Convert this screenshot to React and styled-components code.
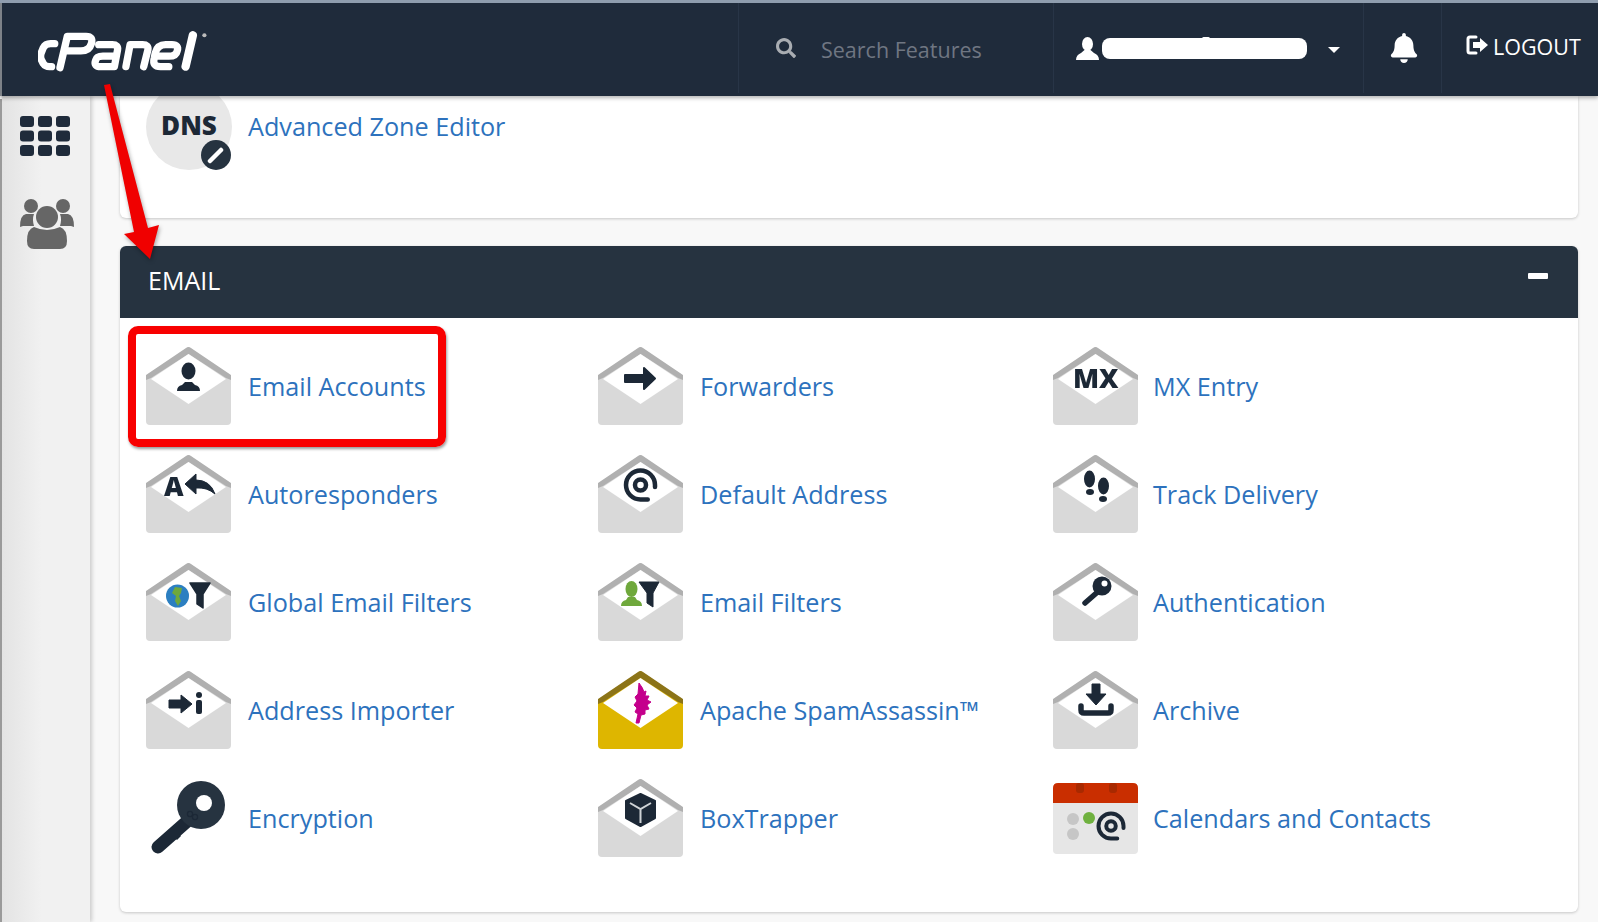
import React from 'react';
import styled, { createGlobalStyle } from 'styled-components';
import { FaSearch, FaBell } from 'react-icons/fa';

const GlobalStyle = createGlobalStyle`
  html, body {
    margin: 0;
    padding: 0;
    background: #f8f8f8;
    font-family: "Open Sans", "Liberation Sans", sans-serif;
  }
`;

const Page = styled.div`
  position: relative;
  width: 1598px;
  height: 922px;
  overflow: hidden;
  display: flex;
  flex-direction: column;
  background: #f8f8f8;
  border-top: 3px solid #8f9dae;
  box-sizing: border-box;
`;

const Header = styled.header`
  position: relative;
  z-index: 2;
  flex: none;
  height: 93px;
  display: flex;
  align-items: stretch;
  background: #1f2b3b;
  border-left: 2px solid #7d8288;
  box-shadow: 0 2px 4px rgba(0, 0, 0, 0.3);
`;

const LogoWrap = styled.div`
  flex: none;
  width: 736px;
  padding: 28px 0 0 36px;
  box-sizing: border-box;
`;

const HeaderCell = styled.div`
  flex: none;
  width: ${(p) => p.$w}px;
  box-sizing: border-box;
  display: flex;
  align-items: center;
  border-left: 1px solid #283547;
  margin-bottom: 3px;
  padding-left: ${(p) => p.$pad}px;
  color: #fff;
`;

const SearchText = styled.span`
  font-size: 21.5px;
  color: #6f7682;
  margin-left: 25px;
  margin-top: 2px;
`;

const Redacted = styled.span`
  position: relative;
  display: block;
  width: 205px;
  height: 21px;
  margin-left: 3px;
  background: #fff;
  border-radius: 8px;

  &::before {
    content: '';
    position: absolute;
    left: 100px;
    top: -1px;
    width: 8px;
    height: 3px;
    border-radius: 2px;
    background: #fff;
  }
`;

const Caret = styled.span`
  width: 0;
  height: 0;
  margin-left: 21px;
  margin-top: 3px;
  border-left: 6px solid transparent;
  border-right: 6px solid transparent;
  border-top: 6px solid #fff;
`;

const LogoutText = styled.span`
  font-size: 21.5px;
  margin-left: 4px;
  margin-top: -4px;
`;

const Body = styled.div`
  flex: 1;
  display: flex;
  min-height: 0;
`;

const Sidebar = styled.nav`
  flex: none;
  width: 88px;
  margin-left: 2px;
  padding: 20px 0 0 18px;
  box-sizing: border-box;
  display: flex;
  flex-direction: column;
  gap: 43px;
  background: linear-gradient(90deg, #e3e3e3 0, #f1f1f1 40px);
  box-shadow: 2px 0 4px rgba(0, 0, 0, 0.18);
`;

const LeftEdge = styled.div`
  position: absolute;
  left: 0;
  top: 96px;
  bottom: 0;
  width: 2px;
  background: #9a9a9a;
`;

const Content = styled.main`
  flex: 1;
  padding: 0 20px 0 30px;
  display: flex;
  flex-direction: column;
  gap: 28px;
`;

const TopPanel = styled.section`
  height: 122px;
  padding-left: 26px;
  background: #fff;
  border-radius: 0 0 6px 6px;
  box-shadow: 0 1px 3px rgba(0, 0, 0, 0.2);
  overflow: hidden;
`;

const TopRow = styled.div`
  display: flex;
  align-items: center;
  margin-top: -12px;
`;

const DnsIcon = styled.div`
  position: relative;
  flex: none;
  width: 86px;
  height: 86px;
  margin-right: 16px;
  border-radius: 50%;
  background: #e8e8e8;
  color: #1c2836;
  font-size: 26px;
  font-weight: 800;
  line-height: 82px;
  text-align: center;
`;

const DnsBadge = styled.span`
  position: absolute;
  right: 1px;
  bottom: 0;
  width: 30px;
  height: 30px;
  border-radius: 50%;
  background: #263340;
  display: flex;
  align-items: center;
  justify-content: center;
`;

const EmailPanel = styled.section`
  background: #fff;
  border-radius: 6px;
  box-shadow: 0 1px 3px rgba(0, 0, 0, 0.2);
`;

const PanelHead = styled.div`
  height: 72px;
  padding: 0 30px 4px 28px;
  box-sizing: border-box;
  display: flex;
  align-items: center;
  justify-content: space-between;
  background: #263340;
  border-radius: 6px 6px 0 0;
  color: #fff;
  font-size: 25px;
`;

const Minus = styled.span`
  display: block;
  width: 20px;
  height: 6px;
  margin-top: -8px;
  background: #fff;
  border-radius: 1px;
`;

const IconSlot = styled.span`
  flex: none;
  display: block;
  width: 85px;
  margin-right: 17px;
  line-height: 0;

  svg {
    display: block;
    filter: blur(0.35px);
  }
`;

const Feature = styled.a`
  position: relative;
  display: flex;
  align-items: center;
  font-size: 25.2px;
  color: #2d72bd;
  text-decoration: none;
`;

const Grid = styled.div`
  display: grid;
  grid-template-columns: 452px 455px 1fr;
  grid-auto-rows: 108px;
  padding: 14px 0 40px 26px;

  ${Feature}:nth-child(3n) ${IconSlot} {
    margin-right: 15px;
  }
`;

const ZoneLink = styled(Feature)`
  top: -1px;
`;

const Highlight = styled.span`
  position: absolute;
  left: -18px;
  top: -6px;
  width: 318px;
  height: 121px;
  box-sizing: border-box;
  border: 8px solid #f80000;
  border-radius: 10px;
  box-shadow: 1px 2px 3px rgba(0, 0, 0, 0.4);
`;

const Arrow = styled.svg`
  position: absolute;
  left: 0;
  top: -3px;
  z-index: 3;
  filter: drop-shadow(1px 2px 2px rgba(0, 0, 0, 0.35));
`;

const DARK = '#1c2836';

const Logo = () => (
  <svg width="180" height="42" viewBox="0 0 172 40" fill="none" stroke="#fff" strokeWidth="7" strokeLinecap="round" strokeLinejoin="round">
    <path d="M16 12 H12 Q7 12 5 16 L3 21 Q2 24 3 27 L5 31 Q7 34 11 34 H13" />
    <path d="M21 35 L28 5 H46 Q53 5 51 12 Q49 19 41 19 H27" />
    <path d="M58 13 H71 Q77 13 76 18 L73 34 H60 Q53 34 55 28 Q56 24 62 24 H74" />
    <path d="M84 34 L88 13 H100 Q106 13 105 18 L101 34" />
    <path d="M125 34 H117 Q109 34 111 26 L112 21 Q114 13 122 13 H128 Q135 13 133 19 Q132 24 125 24 H112" />
    <path d="M141 34 L148 4" strokeWidth="8" />
    <circle cx="159" cy="4" r="2" fill="#bbb" stroke="none" />
  </svg>
);

const UserGlyph = () => (
  <svg width="23" height="23" viewBox="0 0 23 23" fill="#fff">
    <ellipse cx="11.5" cy="7" rx="5.5" ry="7" />
    <path d="M0 23 Q0 18 5 16 L8.5 13 H14.5 L18 16 Q23 18 23 23 Z" />
  </svg>
);

const LogoutGlyph = () => (
  <svg width="23" height="20" viewBox="0 0 23 20" fill="none" style={{ marginTop: -6 }}>
    <path d="M10 2 H4 Q2 2 2 4 V16 Q2 18 4 18 H10" stroke="#fff" strokeWidth="3" strokeLinecap="round" />
    <path d="M7 7 H14 V3 L22 10 L14 17 V13 H7 Z" fill="#fff" />
  </svg>
);

const AppsIcon = () => (
  <svg width="50" height="40" viewBox="0 0 50 40" fill="#1f2b3b">
    {[0, 14.5, 29].map((y) =>
      [0, 18, 36].map((x) => <rect key={`${x}-${y}`} x={x} y={y} width="14" height="11" rx="3" />)
    )}
  </svg>
);

const UsersIcon = () => (
  <svg width="54" height="50" viewBox="0 0 54 50" fill="#666">
    <circle cx="11" cy="7" r="7" />
    <circle cx="43" cy="7" r="7" />
    <path d="M0 28 Q0 16 6 15 H14 Q12 20 14 27 H3 Q0 28 0 28 Z" />
    <path d="M54 28 Q54 16 48 15 H40 Q42 20 40 27 H51 Q54 28 54 28 Z" />
    <circle cx="27" cy="18" r="11" />
    <path d="M7 42 Q7 30 14 28 Q27 34 40 28 Q47 30 47 42 Q47 50 40 50 H14 Q7 50 7 42 Z" />
  </svg>
);

const Envelope = ({ yellow, children }) => (
  <svg width="85" height="78" viewBox="0 0 85 78">
    <path d="M0 29 L42.5 0 L85 29 V74 Q85 78 81 78 H4 Q0 78 0 74 Z" fill={yellow ? '#deb600' : '#d9d9d9'} />
    <path d="M0 28 L40 1 Q42.5 -1 45 1 L85 28 V33 L80 31 L42.5 7 L5 31 L0 33 Z" fill={yellow ? '#8c7418' : '#b0b0b0'} />
    <path d="M42.5 7 L80 32 L42.5 57 L5 32 Z" fill="#fff" />
    {children}
  </svg>
);

const Funnel = ({ x }) => (
  <path transform={`translate(${x} 0)`} d="M0 20 H20 L13 31 V45 L7 41 V31 Z" fill={DARK} stroke={DARK} strokeWidth="1.5" strokeLinejoin="round" />
);

const AtSign = ({ cx, cy, r, w }) => (
  <g fill="none" stroke={DARK} strokeWidth={w} strokeLinecap="round">
    <circle cx={cx} cy={cy} r={r * 0.38} />
    <path d={`M${cx + r * 0.5} ${cy + r} H${cx} A${r} ${r} 0 1 1 ${cx + r} ${cy} V${cy + 2}`} />
  </g>
);

const glyphs = {
  accounts: (
    <g fill={DARK}>
      <ellipse cx="42.5" cy="24" rx="7" ry="8.5" />
      <path d="M31 44 Q31 39 36 38 L39 35 H46 L49 38 Q54 39 54 44 Z" />
    </g>
  ),
  responders: (
    <g fill={DARK}>
      <text x="18" y="41" fontFamily="Open Sans" fontWeight="800" fontSize="27">A</text>
      <path d="M39 29 L50 19 V25 Q64 25 69 39 Q61 32 50 33 V39 Z" stroke={DARK} strokeLinejoin="round" />
    </g>
  ),
  global: (
    <g>
      <circle cx="31.5" cy="33" r="11.5" fill="#2c7fc1" />
      <path d="M29 24 L36 25 L35 30 L33 33 L35 38 L32 43 L29 38 L30 33 L26 30 Z" fill="#6fa83c" />
      <Funnel x={44} />
    </g>
  ),
  importer: (
    <g fill={DARK}>
      <path d="M23 29 H35 V24 L46 33 L35 42 V37 H23 Z" stroke={DARK} strokeLinejoin="round" />
      <circle cx="53" cy="24" r="3" />
      <rect x="50" y="29" width="6" height="14" rx="2" />
    </g>
  ),
  forwarders: (
    <path d="M27 28 H46 V21 L57 31.5 L46 42 V35 H27 Z" fill={DARK} stroke={DARK} strokeWidth="2" strokeLinejoin="round" />
  ),
  defaultAddress: <AtSign cx={42.5} cy={30} r={14.5} w={4.5} />,
  filters: (
    <g>
      <g fill="#6fa83c">
        <ellipse cx="33.5" cy="26" rx="6" ry="8" />
        <path d="M23 43 Q23 38 28 37 L30 34 H37 L39 37 Q44 38 44 43 Z" />
      </g>
      <path d="M41 19 H61 L55 30 V44 L49 40 V30 Z" fill={DARK} stroke={DARK} strokeLinejoin="round" />
    </g>
  ),
  spam: (
    <path d="M41 12 Q45 17 46 21 L48 20 L47 25 L51 25 L49 29 L53 31 L49 34 L51 38 L47 39 L47 43 L43 44 L41 52 L38 52 L40 43 L37 41 L39 37 L36 34 L39 30 L37 26 L40 23 Z" fill="#c4008c" stroke="#c4008c" strokeLinejoin="round" />
  ),
  box: (
    <g>
      <path d="M42.5 15 L57 22 V39 L42.5 47 L28 39 V22 Z" fill={DARK} stroke={DARK} strokeWidth="2" strokeLinejoin="round" />
      <path d="M32 24 L42.5 30 L53 24 M42.5 30 V44" fill="none" stroke="#cfd3d6" strokeWidth="2" />
    </g>
  ),
  mx: (
    <text x="20" y="41" fontFamily="Open Sans" fontWeight="800" fontSize="27" fill={DARK}>MX</text>
  ),
  track: (
    <g fill={DARK}>
      <ellipse cx="36.5" cy="24" rx="5.5" ry="8.5" />
      <ellipse cx="37" cy="37" rx="4" ry="3" />
      <ellipse cx="50.5" cy="31" rx="5.5" ry="8.5" />
      <ellipse cx="50" cy="44" rx="4" ry="3" />
    </g>
  ),
  auth: (
    <g>
      <path d="M48 26 L32 40" stroke={DARK} strokeWidth="5.5" strokeLinecap="round" />
      <circle cx="49" cy="23" r="9.5" fill={DARK} />
      <circle cx="51.5" cy="20.5" r="3" fill="#fff" />
    </g>
  ),
  archive: (
    <g>
      <path d="M39 13 H47 V23 H53 L43 34 L33 23 H39 Z" fill={DARK} stroke={DARK} strokeLinejoin="round" />
      <path d="M28 35 V39 Q28 42 31 42 H55 Q58 42 58 39 V35" fill="none" stroke={DARK} strokeWidth="5.5" strokeLinecap="round" />
    </g>
  ),
};

const EnvelopeIcon = ({ name, yellow }) => <Envelope yellow={yellow}>{glyphs[name]}</Envelope>;

const KeyIcon = () => (
  <svg width="85" height="74" viewBox="0 0 85 74">
    <path d="M46 36 L12 66" stroke="#1c2836" strokeWidth="13" strokeLinecap="round" />
    <path d="M24 52 L31 59 L35 55 L28 48 Z" fill="#1c2836" />
    <circle cx="55" cy="24" r="24" fill="#263340" />
    <circle cx="58" cy="22" r="8" fill="#fff" />
    <g fill="none" stroke="#1c2836" strokeWidth="1.2">
      <circle cx="44" cy="33" r="2.6" />
      <circle cx="49" cy="36" r="2.6" />
    </g>
  </svg>
);

const CalendarIcon = () => (
  <svg width="85" height="71" viewBox="0 0 85 71">
    <path d="M0 20 V5 Q0 0 5 0 H80 Q85 0 85 5 V20 Z" fill="#c92e00" />
    <rect x="23" y="0" width="8" height="10" rx="3" fill="#a82900" />
    <rect x="56" y="0" width="8" height="10" rx="3" fill="#a82900" />
    <path d="M0 20 H85 V67 Q85 71 81 71 H4 Q0 71 0 67 Z" fill="#e6e6e6" />
    <circle cx="20" cy="36" r="6" fill="#c6c6c6" />
    <circle cx="36" cy="35" r="6" fill="#6fb13f" />
    <circle cx="20" cy="51" r="6" fill="#c6c6c6" />
    <AtSign cx={58} cy={43} r={12.5} w={4} />
  </svg>
);

const features = [
  { label: 'Email Accounts', icon: <EnvelopeIcon name="accounts" />, marked: true },
  { label: 'Forwarders', icon: <EnvelopeIcon name="forwarders" /> },
  { label: 'MX Entry', icon: <EnvelopeIcon name="mx" /> },
  { label: 'Autoresponders', icon: <EnvelopeIcon name="responders" /> },
  { label: 'Default Address', icon: <EnvelopeIcon name="defaultAddress" /> },
  { label: 'Track Delivery', icon: <EnvelopeIcon name="track" /> },
  { label: 'Global Email Filters', icon: <EnvelopeIcon name="global" /> },
  { label: 'Email Filters', icon: <EnvelopeIcon name="filters" /> },
  { label: 'Authentication', icon: <EnvelopeIcon name="auth" /> },
  { label: 'Address Importer', icon: <EnvelopeIcon name="importer" /> },
  { label: 'Apache SpamAssassin™', icon: <EnvelopeIcon name="spam" yellow /> },
  { label: 'Archive', icon: <EnvelopeIcon name="archive" /> },
  { label: 'Encryption', icon: <KeyIcon /> },
  { label: 'BoxTrapper', icon: <EnvelopeIcon name="box" /> },
  { label: 'Calendars and Contacts', icon: <CalendarIcon /> },
];

function App() {
  return (
    <Page>
      <GlobalStyle />
      <Header>
        <LogoWrap>
          <Logo />
        </LogoWrap>
        <HeaderCell $w={315} $pad={37}>
          <FaSearch size={20} color="#a9adb2" />
          <SearchText>Search Features</SearchText>
        </HeaderCell>
        <HeaderCell $w={310} $pad={22}>
          <UserGlyph />
          <Redacted />
          <Caret />
        </HeaderCell>
        <HeaderCell $w={78} $pad={25}>
          <FaBell size={30} />
        </HeaderCell>
        <HeaderCell $w={157} $pad={24}>
          <LogoutGlyph />
          <LogoutText>LOGOUT</LogoutText>
        </HeaderCell>
      </Header>
      <LeftEdge />
      <Body>
        <Sidebar>
          <AppsIcon />
          <UsersIcon />
        </Sidebar>
        <Content>
          <TopPanel>
            <TopRow>
              <DnsIcon>
                DNS
                <DnsBadge>
                  <svg width="18" height="18" viewBox="0 0 18 18">
                    <path d="M3 15 L14 4" stroke="#fff" strokeWidth="4.5" strokeLinecap="round" />
                  </svg>
                </DnsBadge>
              </DnsIcon>
              <ZoneLink>Advanced Zone Editor</ZoneLink>
            </TopRow>
          </TopPanel>
          <EmailPanel>
            <PanelHead>
              EMAIL
              <Minus />
            </PanelHead>
            <Grid>
              {features.map((f) => (
                <Feature key={f.label}>
                  <IconSlot>{f.icon}</IconSlot>
                  {f.label}
                  {f.marked && <Highlight />}
                </Feature>
              ))}
            </Grid>
          </EmailPanel>
        </Content>
      </Body>
      <Arrow width="170" height="260" viewBox="0 0 170 260">
        <path d="M104 85 L110 84 L148 228 L159 225 L150 259 L124 234 L134 232 Z" fill="#f00000" />
      </Arrow>
    </Page>
  );
}

export default App;
